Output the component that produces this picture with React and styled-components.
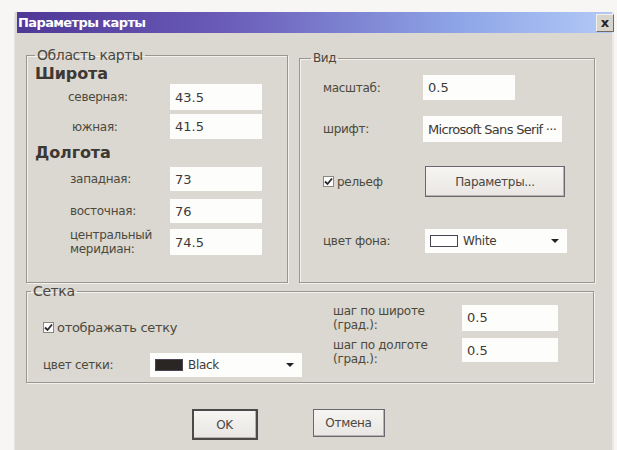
import styled, { createGlobalStyle } from "styled-components"

const GlobalStyle = createGlobalStyle`
  html, body {
    margin: 0;
    padding: 0;
    background: #f7f6f4;
  }
  body {
    font-family: "DejaVu Sans", Verdana, sans-serif;
  }
`

const Dialog = styled.div`
  margin: 12px 0 0 14px;
  width: 600px;
  height: 438px;
  background: #dbd7d1;
  border-left: 1px solid #e9e6e1;
  border-right: 2px solid #ece9e4;
  box-sizing: border-box;
  display: flex;
  flex-direction: column;
`

const TitleBar = styled.div`
  height: 21px;
  margin: 0 0 0 2px;
  display: flex;
  align-items: center;
  justify-content: space-between;
  background: linear-gradient(90deg, #4f3796 0%, #6a5cb8 35%, #8fa6e8 75%, #b2c9f6 100%);
`

const Title = styled.span`
  color: #fff;
  font-weight: bold;
  font-size: 13px;
  letter-spacing: -0.6px;
  padding-left: 1px;
`

const CloseBox = styled.div`
  width: 18px;
  height: 18px;
  margin-right: -2px;
  box-sizing: border-box;
  background: #d8d4cc;
  border: 1px solid #f4f2ee;
  border-right-color: #6e6a64;
  border-bottom-color: #6e6a64;
  display: flex;
  align-items: center;
  justify-content: center;
  font-weight: bold;
  font-size: 13px;
  line-height: 13px;
  color: #222;
`

const Body = styled.div`
  padding: 14px 18px 0 11px;
  display: flex;
  flex-direction: column;
`

const TopRow = styled.div`
  display: grid;
  grid-template-columns: 262px 296px;
  gap: 11px;
`

const Group = styled.fieldset`
  margin: 0;
  padding: ${p => p.$pad || "0 8px"};
  height: ${p => p.$h}px;
  box-sizing: border-box;
  border: 1px solid #9a958f;
  box-shadow: 1px 1px 0 #f3f1ed, inset 1px 1px 0 #f3f1ed;
  min-width: 0;
`

const Legend = styled.legend`
  padding: 0 2px;
  margin-left: ${p => p.$ml || 0}px;
  font-size: ${p => p.$size || 14}px;
  color: #4a4740;
  letter-spacing: -0.4px;
  line-height: 16px;
`

const Heading = styled.div`
  font-weight: bold;
  font-size: 16px;
  line-height: 18px;
  color: #3c3833;
  margin-top: ${p => p.$mt}px;
  letter-spacing: -0.1px;
`

const Row = styled.div`
  display: flex;
  align-items: center;
  margin-top: ${p => p.$mt}px;
  padding-left: ${p => p.$indent || 0}px;
  height: ${p => p.$h || 25}px;
`

const Label = styled.div`
  width: ${p => p.$w}px;
  flex-shrink: 0;
  font-size: 12px;
  line-height: 14px;
  color: #4b4a3c;
  letter-spacing: -0.3px;
`

const Field = styled.div`
  width: ${p => p.$w}px;
  height: ${p => p.$h || 25}px;
  background: #fdfdfc;
  box-sizing: border-box;
  padding-left: 5px;
  display: flex;
  align-items: center;
  font-size: 13px;
  color: #3e3a36;
  white-space: nowrap;
  overflow: hidden;
  letter-spacing: ${p => (p.$tight ? "-0.7px" : "0")};
`

const Check = styled.label`
  display: flex;
  align-items: center;
  gap: 3px;
  font-size: ${p => p.$size || 12}px;
  letter-spacing: -0.3px;
  color: #4b4a3c;
  width: ${p => p.$w || "auto"};
`

const Box = styled.span`
  width: 11px;
  height: 11px;
  background: #fbfbfb;
  border: 1px solid #8a877f;
  box-sizing: border-box;
  display: inline-flex;
  align-items: center;
  justify-content: center;
`

const Button = styled.div`
  width: ${p => p.$w}px;
  height: ${p => p.$h}px;
  box-sizing: border-box;
  background: linear-gradient(#f6f5f3, #e9e6e2);
  border: ${p => (p.$default ? "2px solid #4c4a48" : "1px solid #6c6670")};
  box-shadow: inset -1px -1px 0 #b6b2ad;
  display: flex;
  align-items: center;
  justify-content: center;
  font-size: 12px;
  color: #4a4742;
  letter-spacing: -0.3px;
`

const Combo = styled.div`
  width: ${p => p.$w}px;
  height: 24px;
  box-sizing: border-box;
  background: #fdfdfc;
  display: flex;
  align-items: center;
  padding: 0 8px 0 5px;
  font-size: 12px;
  color: #3e3a36;
  letter-spacing: -0.3px;
`

const Swatch = styled.span`
  width: 28px;
  height: 12px;
  box-sizing: border-box;
  background: ${p => p.$color};
  border: 1px solid #4a4452;
  margin-right: 5px;
`

const Arrow = styled.span`
  margin-left: auto;
  width: 0;
  height: 0;
  border-left: 4px solid transparent;
  border-right: 4px solid transparent;
  border-top: 4px solid #222;
`

const GridCols = styled.div`
  display: grid;
  grid-template-columns: 290px 1fr;
`

const Col = styled.div`
  display: flex;
  flex-direction: column;
`

const Footer = styled.div`
  display: flex;
  justify-content: center;
  gap: 55px;
  margin-top: 26px;
  padding-right: 44px;
  align-items: flex-start;
`

const Tick = () => (
  <svg width="9" height="9" viewBox="0 0 9 9">
    <path d="M1 4.5 L3.5 7 L8 1.5" fill="none" stroke="#2a2a2a" strokeWidth="1.8" />
  </svg>
)

export default function App() {
  return (
    <>
      <GlobalStyle />
      <Dialog>
        <TitleBar>
          <Title>Параметры карты</Title>
          <CloseBox>x</CloseBox>
        </TitleBar>
        <Body>
          <TopRow>
            <Group $h={236}>
              <Legend $size={14}>Область карты</Legend>
              <Heading $mt={2}>Широта</Heading>
              <Row $mt={1} $h={26} $indent={33}>
                <Label $w={102}>северная:</Label>
                <Field $w={92} $h={26}>43.5</Field>
              </Row>
              <Row $mt={4} $indent={37}>
                <Label $w={98}>южная:</Label>
                <Field $w={92}>41.5</Field>
              </Row>
              <Heading $mt={5}>Долгота</Heading>
              <Row $mt={5} $h={24} $indent={35}>
                <Label $w={100}>западная:</Label>
                <Field $w={92} $h={24}>73</Field>
              </Row>
              <Row $mt={8} $h={24} $indent={35}>
                <Label $w={100}>восточная:</Label>
                <Field $w={92} $h={24}>76</Field>
              </Row>
              <Row $mt={6} $h={26} $indent={35}>
                <Label $w={100}>центральный меридиан:</Label>
                <Field $w={92} $h={26}>74.5</Field>
              </Row>
            </Group>
            <Group $h={233} $pad="0 20px" style={{ marginTop: 3 }}>
              <Legend $size={12} $ml={-9}>Вид</Legend>
              <Row $mt={9} $h={25} $indent={3}>
                <Label $w={100}>масштаб:</Label>
                <Field $w={92}>0.5</Field>
              </Row>
              <Row $mt={16} $h={26} $indent={3}>
                <Label $w={100}>шрифт:</Label>
                <Field $w={139} $h={26} $tight>Microsoft Sans Serif ···</Field>
              </Row>
              <Row $mt={24} $h={31} $indent={3}>
                <Check $w="102px">
                  <Box><Tick /></Box>
                  рельеф
                </Check>
                <Button $w={140} $h={31}>Параметры...</Button>
              </Row>
              <Row $mt={32} $h={24} $indent={3}>
                <Label $w={102}>цвет фона:</Label>
                <Combo $w={142}>
                  <Swatch $color="#ffffff" />
                  White
                  <Arrow />
                </Combo>
              </Row>
            </Group>
          </TopRow>
          <Group $h={100} $pad="0 16px">
            <Legend $size={14} $ml={-12}>Сетка</Legend>
            <GridCols>
              <Col>
                <Row $mt={18} $h={20}>
                  <Check $size={13}>
                    <Box><Tick /></Box>
                    отображать сетку
                  </Check>
                </Row>
                <Row $mt={15} $h={25}>
                  <Label $w={107}>цвет сетки:</Label>
                  <Combo $w={152}>
                    <Swatch $color="#2a2624" />
                    Black
                    <Arrow />
                  </Combo>
                </Row>
              </Col>
              <Col>
                <Row $mt={5} $h={27}>
                  <Label $w={129}>шаг по широте (град.):</Label>
                  <Field $w={96} $h={26}>0.5</Field>
                </Row>
                <Row $mt={7} $h={27}>
                  <Label $w={129}>шаг по долготе (град.):</Label>
                  <Field $w={96} $h={24} style={{ alignSelf: "flex-start" }}>0.5</Field>
                </Row>
              </Col>
            </GridCols>
          </Group>
          <Footer>
            <Button $w={66} $h={31} $default>OK</Button>
            <Button $w={72} $h={28}>Отмена</Button>
          </Footer>
        </Body>
      </Dialog>
    </>
  )
}
